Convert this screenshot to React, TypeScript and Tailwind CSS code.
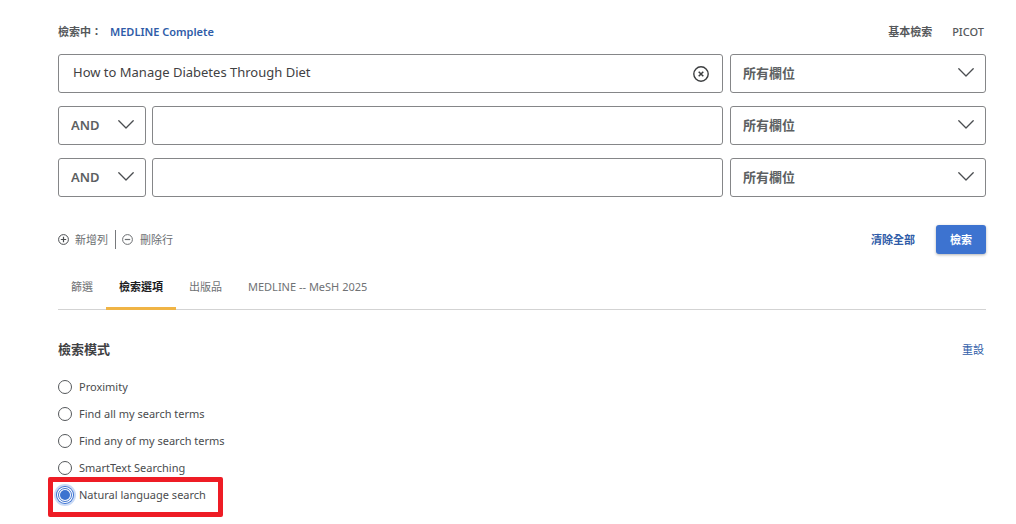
import { useState } from "react";
import clsx from "clsx";

const fieldOptions = ["所有欄位", "標題", "作者", "主題"];
const operators = ["AND", "OR", "NOT"];
const tabs = ["篩選", "檢索選項", "出版品", "MEDLINE -- MeSH 2025"];
const modes = [
  "Proximity",
  "Find all my search terms",
  "Find any of my search terms",
  "SmartText Searching",
  "Natural language search",
];

const Chevron = () => (
  <svg
    viewBox="0 0 16 9"
    className="pointer-events-none absolute right-3 top-3.5 h-[9px] w-4"
    fill="none"
    stroke="#4a4d50"
    strokeWidth="1.3"
    strokeLinecap="round"
    strokeLinejoin="round"
    aria-hidden="true"
  >
    <path d="M0.8 0.8 8 8 15.2 0.8" />
  </svg>
);

type SelectProps = {
  label: string;
  options: string[];
  className: string;
};

const Select = ({ label, options, className }: SelectProps) => (
  <div className={clsx("relative shrink-0", className)}>
    <select
      aria-label={label}
      className="h-[39px] w-full appearance-none rounded-[3px] border border-[#858688] bg-white pb-0.5 pl-3 pr-8 text-[13px] font-semibold text-[#5c5f62]"
    >
      {options.map((option) => (
        <option key={option}>{option}</option>
      ))}
    </select>
    <Chevron />
  </div>
);

type SearchRowProps = {
  index: number;
  value: string;
  onChange: (value: string) => void;
};

const SearchRow = ({ index, value, onChange }: SearchRowProps) => (
  <div className="flex">
    {index > 0 && <Select label="布林運算" options={operators} className="mr-1.5 w-[88px]" />}
    <div className="relative min-w-0 flex-1">
      <input
        type="text"
        aria-label={`檢索詞 ${index + 1}`}
        value={value}
        onChange={(e) => onChange(e.target.value)}
        className="h-[39px] w-full rounded-[3px] border border-[#858688] bg-white pb-1 pl-3.5 pr-10 text-[13px] text-[#3f4143]"
      />
      {value && (
        <button
          type="button"
          aria-label="清除"
          onClick={() => onChange("")}
          className="absolute right-3.5 top-3"
        >
          <svg viewBox="0 0 16 16" className="size-4" fill="none" stroke="#3c3e40" aria-hidden="true">
            <circle cx="8" cy="8" r="7.2" strokeWidth="1.4" />
            <path d="M5.7 5.7l4.6 4.6M10.3 5.7l-4.6 4.6" strokeWidth="1.5" />
          </svg>
        </button>
      )}
    </div>
    <Select label="欄位" options={fieldOptions} className="ml-[7px] w-64" />
  </div>
);

const App = () => {
  const [terms, setTerms] = useState(["How to Manage Diabetes Through Diet", "", ""]);
  const [activeTab, setActiveTab] = useState("檢索選項");
  const [mode, setMode] = useState("Natural language search");

  const updateTerm = (index: number, value: string) =>
    setTerms(terms.map((term, i) => (i === index ? value : term)));

  return (
    <main
      lang="zh-Hant"
      className="min-h-screen bg-white pb-3 pl-[58px] pr-[30px] pt-6 font-['Noto_Sans','Noto_Sans_CJK_TC',sans-serif] text-[11px] leading-4 text-[#55585b]"
    >
      <div className="flex items-center justify-between font-semibold">
        <div className="flex">
          <span>檢索中：</span>
          <a href="#database" className="ml-2 text-[#2f5ca8]">
            MEDLINE Complete
          </a>
        </div>
        <nav className="flex gap-5 pr-0.5">
          <a href="#basic">基本檢索</a>
          <a href="#picot" className="font-medium">PICOT</a>
        </nav>
      </div>

      <form onSubmit={(e) => e.preventDefault()}>
        <div className="mt-3.5 flex flex-col gap-[13px]">
          {terms.map((term, i) => (
            <SearchRow key={i} index={i} value={term} onChange={(value) => updateTerm(i, value)} />
          ))}
        </div>

        <div className="mt-7 flex items-center justify-between">
          <div className="flex items-center text-[#6b6e71]">
            <button type="button" onClick={() => setTerms([...terms, ""])} className="flex items-center gap-1.5">
              <svg viewBox="0 0 11 11" className="size-[11px]" fill="none" stroke="#4a4d50" aria-hidden="true">
                <circle cx="5.5" cy="5.5" r="4.9" />
                <path d="M5.5 2.8v5.4M2.8 5.5h5.4" strokeWidth="1.2" />
              </svg>
              新增列
            </button>
            <span className="ml-[7px] mr-1.5 h-[19px] w-px bg-[#77797c]" />
            <button type="button" onClick={() => setTerms(terms.slice(0, -1))} className="flex items-center gap-[7px]">
              <svg viewBox="0 0 11 11" className="size-[11px]" fill="none" stroke="#6b6e71" aria-hidden="true">
                <circle cx="5.5" cy="5.5" r="4.9" />
                <path d="M2.8 5.5h5.4" strokeWidth="1.2" />
              </svg>
              刪除行
            </button>
          </div>
          <div className="flex items-center gap-[21px]">
            <button type="button" onClick={() => setTerms(["", "", ""])} className="font-semibold text-[#2f5ca8]">
              清除全部
            </button>
            <button
              type="submit"
              className="h-[29px] w-[50px] rounded-[3px] bg-[#3d73d0] font-bold text-white shadow-[0_1px_3px_rgba(0,0,0,0.3)]"
            >
              檢索
            </button>
          </div>
        </div>
      </form>

      <div role="tablist" className="mt-[13px] flex h-[43px] border-b border-[#d3d3d3]">
        {tabs.map((tab) => (
          <button
            key={tab}
            type="button"
            role="tab"
            aria-selected={tab === activeTab}
            onClick={() => setActiveTab(tab)}
            className={clsx(
              "h-[43px] border-b-[3px] px-[13px]",
              tab === activeTab
                ? "border-[#f0b445] font-bold text-[#1c1d1f]"
                : "border-transparent text-[#6f7275]"
            )}
          >
            {tab}
          </button>
        ))}
      </div>

      <section>
        <div className="mt-[29px] flex items-center justify-between pr-0.5">
          <h2 className="text-[13px] font-bold leading-5 text-[#3f4143]">檢索模式</h2>
          <button type="button" className="pt-0.5 text-[#2f5ca8]">重設</button>
        </div>
        <fieldset aria-label="檢索模式" className="mt-3.5">
          {modes.map((name) => (
            <div key={name} className="relative flex h-[27px] items-center">
              <label className="flex items-center gap-[7px] text-[#4a4c4e]">
                <input
                  type="radio"
                  name="mode"
                  checked={mode === name}
                  onChange={() => setMode(name)}
                  className="grid size-3.5 appearance-none place-items-center rounded-full border border-[#55585b] bg-white before:size-2.5 before:rounded-full checked:border-[#3d73d0] checked:shadow-[0_0_0_1px_#fff,0_0_0_2px_#3d73d0,0_0_0_4px_#c9daf6] checked:before:bg-[#3d73d0]"
                />
                {name}
              </label>
              {name === "Natural language search" && (
                <span className="pointer-events-none absolute -left-2.5 -top-1 h-10 w-[175px] rounded-[2px] border-[5px] border-[#ee1c25]" />
              )}
            </div>
          ))}
        </fieldset>
      </section>
    </main>
  );
};

export default App;
